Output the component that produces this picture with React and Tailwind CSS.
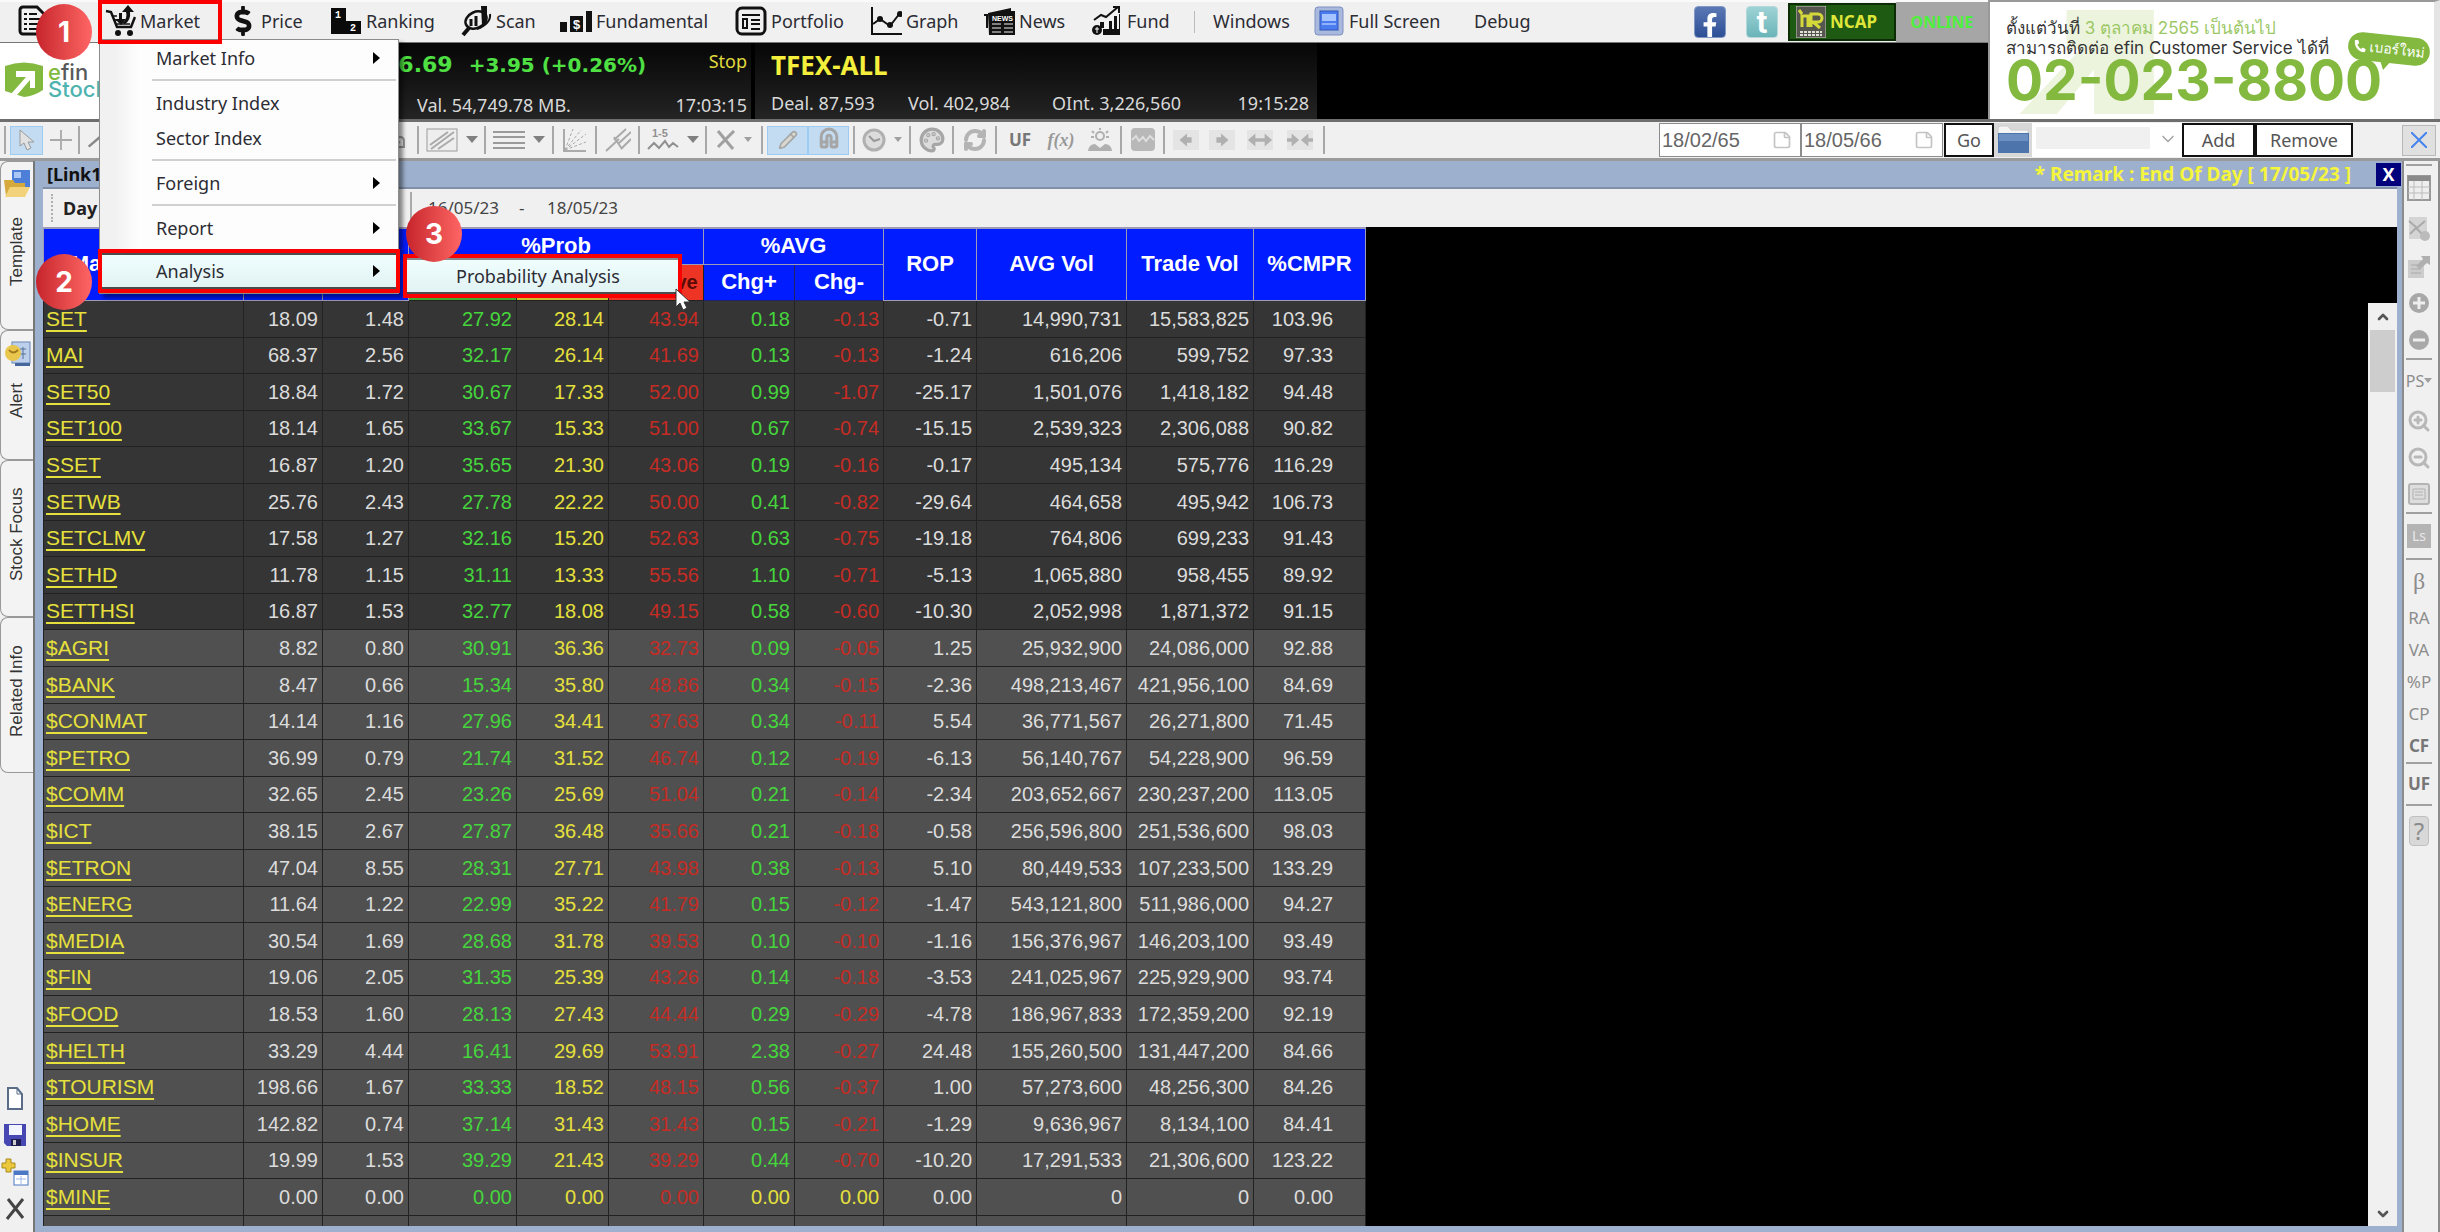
import { FaFacebookF, FaDollarSign, FaPhoneAlt } from 'react-icons/fa';
import {
  Palette, RefreshCw, ZoomIn, ZoomOut, Magnet, Pencil,
  ChevronUp, ChevronDown, StickyNote,
} from 'lucide-react';

const rows = [
  ['SET', '18.09', '1.48', '27.92', '28.14', '43.94', '0.18', '-0.13', '-0.71', '14,990,731', '15,583,825', '103.96'],
  ['MAI', '68.37', '2.56', '32.17', '26.14', '41.69', '0.13', '-0.13', '-1.24', '616,206', '599,752', '97.33'],
  ['SET50', '18.84', '1.72', '30.67', '17.33', '52.00', '0.99', '-1.07', '-25.17', '1,501,076', '1,418,182', '94.48'],
  ['SET100', '18.14', '1.65', '33.67', '15.33', '51.00', '0.67', '-0.74', '-15.15', '2,539,323', '2,306,088', '90.82'],
  ['SSET', '16.87', '1.20', '35.65', '21.30', '43.06', '0.19', '-0.16', '-0.17', '495,134', '575,776', '116.29'],
  ['SETWB', '25.76', '2.43', '27.78', '22.22', '50.00', '0.41', '-0.82', '-29.64', '464,658', '495,942', '106.73'],
  ['SETCLMV', '17.58', '1.27', '32.16', '15.20', '52.63', '0.63', '-0.75', '-19.18', '764,806', '699,233', '91.43'],
  ['SETHD', '11.78', '1.15', '31.11', '13.33', '55.56', '1.10', '-0.71', '-5.13', '1,065,880', '958,455', '89.92'],
  ['SETTHSI', '16.87', '1.53', '32.77', '18.08', '49.15', '0.58', '-0.60', '-10.30', '2,052,998', '1,871,372', '91.15'],
  ['$AGRI', '8.82', '0.80', '30.91', '36.36', '32.73', '0.09', '-0.05', '1.25', '25,932,900', '24,086,000', '92.88'],
  ['$BANK', '8.47', '0.66', '15.34', '35.80', '48.86', '0.34', '-0.15', '-2.36', '498,213,467', '421,956,100', '84.69'],
  ['$CONMAT', '14.14', '1.16', '27.96', '34.41', '37.63', '0.34', '-0.11', '5.54', '36,771,567', '26,271,800', '71.45'],
  ['$PETRO', '36.99', '0.79', '21.74', '31.52', '46.74', '0.12', '-0.19', '-6.13', '56,140,767', '54,228,900', '96.59'],
  ['$COMM', '32.65', '2.45', '23.26', '25.69', '51.04', '0.21', '-0.14', '-2.34', '203,652,667', '230,237,200', '113.05'],
  ['$ICT', '38.15', '2.67', '27.87', '36.48', '35.66', '0.21', '-0.18', '-0.58', '256,596,800', '251,536,600', '98.03'],
  ['$ETRON', '47.04', '8.55', '28.31', '27.71', '43.98', '0.38', '-0.13', '5.10', '80,449,533', '107,233,500', '133.29'],
  ['$ENERG', '11.64', '1.22', '22.99', '35.22', '41.79', '0.15', '-0.12', '-1.47', '543,121,800', '511,986,000', '94.27'],
  ['$MEDIA', '30.54', '1.69', '28.68', '31.78', '39.53', '0.10', '-0.10', '-1.16', '156,376,967', '146,203,100', '93.49'],
  ['$FIN', '19.06', '2.05', '31.35', '25.39', '43.26', '0.14', '-0.18', '-3.53', '241,025,967', '225,929,900', '93.74'],
  ['$FOOD', '18.53', '1.60', '28.13', '27.43', '44.44', '0.29', '-0.29', '-4.78', '186,967,833', '172,359,200', '92.19'],
  ['$HELTH', '33.29', '4.44', '16.41', '29.69', '53.91', '2.38', '-0.27', '24.48', '155,260,500', '131,447,200', '84.66'],
  ['$TOURISM', '198.66', '1.67', '33.33', '18.52', '48.15', '0.56', '-0.37', '1.00', '57,273,600', '48,256,300', '84.26'],
  ['$HOME', '142.82', '0.74', '37.14', '31.43', '31.43', '0.15', '-0.21', '-1.29', '9,636,967', '8,134,100', '84.41'],
  ['$INSUR', '19.99', '1.53', '39.29', '21.43', '39.29', '0.44', '-0.70', '-10.20', '17,291,533', '21,306,600', '123.22'],
  ['$MINE', '0.00', '0.00', '0.00', '0.00', '0.00', '0.00', '0.00', '0.00', '0', '0', '0.00'],
];

const WHITE = 'text-[#dcdcdc]';
const GREEN = 'text-[#45d63c]';
const YELLOW = 'text-[#e6e03c]';
const RED = 'text-[#c52c24]';
const columnColors = [YELLOW, WHITE, WHITE, GREEN, YELLOW, RED, GREEN, RED, WHITE, WHITE, WHITE, WHITE];

const cellColor = (value, col) => {
  // unchanged averages are yellow
  if ((col === 6 || col === 7) && value === '0.00') return YELLOW;
  return columnColors[col];
};

/* ---------- menu bar icons ---------- */

const DocIcon = () => (
  <svg viewBox="0 0 32 32" className="w-8 h-8">
    <path d="M5 2h14l8 8v16a3 3 0 0 1-3 3H5a3 3 0 0 1-3-3V5a3 3 0 0 1 3-3z" fill="none" stroke="#111" strokeWidth="3" />
    <path d="M6 9h3M11 9h8M6 14h3M11 14h12M6 19h3M11 19h12M6 24h3M11 24h12" stroke="#111" strokeWidth="2" />
  </svg>
);

const CartIcon = () => (
  <svg viewBox="0 0 32 32" className="w-8 h-8">
    <path d="M2 6l5 1 6 15h14l4-10" fill="none" stroke="#111" strokeWidth="2.5" />
    <path d="M9 11h4M11 15h4M13 19h13" stroke="#111" strokeWidth="1.5" />
    <path d="M15 8h3v6h4l-5 6-6-6h4z" fill="#111" />
    <path d="M24 0l6 7h-4q1 8-5 12l-3-1q6-4 4-11h-4z" fill="#111" />
    <circle cx="14" cy="28" r="3" fill="#111" />
    <circle cx="26" cy="28" r="3" fill="#111" />
  </svg>
);

const RankingIcon = () => (
  <svg viewBox="0 0 32 32" className="w-8 h-8">
    <path d="M1 3h15v13h15v13H1z" fill="#0a0a0a" />
    <text x="5" y="13" fontSize="10" fontWeight="bold" fill="#fff" fontFamily="Liberation Mono, monospace">1</text>
    <text x="20" y="26" fontSize="10" fontWeight="bold" fill="#fff" fontFamily="Liberation Mono, monospace">2</text>
  </svg>
);

const ScanIcon = () => (
  <svg viewBox="0 0 32 32" className="w-8 h-8">
    <ellipse cx="16" cy="15" rx="11" ry="8" transform="rotate(-25 16 15)" fill="none" stroke="#111" strokeWidth="2.5" />
    <path d="M9 23l-6 7" stroke="#111" strokeWidth="4" />
    <path d="M11 14v7M16 11v10" stroke="#111" strokeWidth="3" />
    <path d="M21 1h6v14l-5 5z" fill="#111" />
    <path d="M30 9c1 6-4 12-13 15" fill="none" stroke="#111" strokeWidth="2" />
  </svg>
);

const FundamentalIcon = () => (
  <svg viewBox="0 0 32 32" className="w-8 h-8">
    <path d="M0 17h7v10H0zM10 11h13v16H10zM26 6h6v21h-6z" fill="#111" />
    <text x="13" y="24" fontSize="13" fontWeight="bold" fill="#fff" fontFamily="Liberation Sans, sans-serif">$</text>
  </svg>
);

const PortfolioIcon = () => (
  <svg viewBox="0 0 32 32" className="w-8 h-8">
    <rect x="2" y="3" width="28" height="26" rx="5" fill="none" stroke="#111" strokeWidth="3" />
    <path d="M7 10h18M16 15h9M16 19h9M16 24h9" stroke="#111" strokeWidth="2" />
    <rect x="8" y="14" width="4" height="9" fill="none" stroke="#111" strokeWidth="2" />
  </svg>
);

const GraphIcon = () => (
  <svg viewBox="0 0 32 32" className="w-8 h-8">
    <path d="M2 2v27h30" fill="none" stroke="#111" strokeWidth="2" />
    <path d="M3 19l7-5 10 7 10-13" fill="none" stroke="#111" strokeWidth="2" />
    <circle cx="10" cy="14" r="3" fill="#111" />
    <circle cx="20" cy="20" r="3" fill="#111" />
    <circle cx="30" cy="9" r="3" fill="#111" />
  </svg>
);

const NewsIcon = () => (
  <svg viewBox="0 0 32 32" className="w-8 h-8">
    <path d="M1 9h4v14H3V11H1zM5 8l23-5v3H32v24H6z" fill="#111" />
    <path d="M9 19h9M9 23h9M9 27h9M21 19h9M21 23h9M21 27h9" stroke="#f0f0f0" strokeWidth="1" />
    <text x="9" y="16" fontSize="7" fontWeight="bold" fill="#fff" fontFamily="Liberation Sans, sans-serif">NEWS</text>
  </svg>
);

const FundIcon = () => (
  <svg viewBox="0 0 32 32" className="w-8 h-8">
    <path d="M3 15l7-5 5 2 12-10M22 2h6v6" fill="none" stroke="#111" strokeWidth="2" />
    <path d="M18 16h3v14h-3zM23 11h3v19h-3zM28 9h1v21h-1zM9 17h4v6H9zM12 24h17v6H12z" fill="#111" />
    <circle cx="6" cy="25" r="5" fill="#111" />
    <path d="M6 22v6M4 24h4" stroke="#fff" strokeWidth="1" />
  </svg>
);

const ScreenIcon = () => (
  <svg viewBox="0 0 32 32" className="w-8 h-8">
    <rect x="2" y="2" width="28" height="28" rx="3" fill="#a9b8dd" stroke="#7f90c0" strokeWidth="1" />
    <rect x="7" y="6" width="18" height="19" fill="#4a7cf0" stroke="#3457b5" />
    <path d="M9 9h14v7H9z" fill="#a6c4ff" />
    <path d="M9 19h14" stroke="#8fb2fb" strokeWidth="2" />
  </svg>
);

const menuItems = [
  { icon: <CartIcon />, label: 'Market', width: 'w-[125px]' },
  { icon: <FaDollarSign className="w-7 h-[30px]" color="#111" />, label: 'Price', width: 'w-[101px]' },
  { icon: <RankingIcon />, label: 'Ranking', width: 'w-[130px]' },
  { icon: <ScanIcon />, label: 'Scan', width: 'w-[100px]' },
  { icon: <FundamentalIcon />, label: 'Fundamental', width: 'w-[175px]' },
  { icon: <PortfolioIcon />, label: 'Portfolio', width: 'w-[135px]' },
  { icon: <GraphIcon />, label: 'Graph', width: 'w-[113px]' },
  { icon: <NewsIcon />, label: 'News', width: 'w-[108px]' },
  { icon: <FundIcon />, label: 'Fund', width: 'w-[103px]' },
];

const MenuBar = () => (
  <nav className="h-[42px] flex items-center bg-[#f0f0f0] pl-[18px] border-t-2 border-[#fafafa] text-[#2c2c34]">
    <button className="w-[86px] h-10 pb-[2px] flex items-center" aria-label="File"><DocIcon /></button>
    {menuItems.map((item) => (
      <button key={item.label} className={`${item.width} h-10 pb-[2px] shrink-0 flex items-center gap-1 text-left whitespace-nowrap`}>
        {item.icon}
        {item.label}
      </button>
    ))}
    <span className="w-px h-[22px] bg-[#bbb]" />
    <button className="w-[118px] h-10 pb-[2px] text-left pl-[18px]">Windows</button>
    <button className="w-[161px] h-10 pb-[2px] flex items-center gap-1 whitespace-nowrap"><ScreenIcon />Full Screen</button>
    <button className="h-10 pb-[2px]">Debug</button>

    <div className="ml-auto flex items-center self-stretch">
      <a href="#facebook" aria-label="Facebook" className="w-8 h-8 rounded bg-linear-to-b from-[#5b78b5] to-[#2d4f95] border border-[#8298c4] flex items-end justify-center">
        <FaFacebookF className="w-5 h-6 text-white" />
      </a>
      <a href="#twitter" aria-label="Twitter" className="ml-5 w-8 h-8 rounded bg-linear-to-b from-[#9ed3d6] to-[#6ab4b8] border border-[#b5d8da] flex items-center justify-center text-white font-bold text-[30px] leading-6 font-[Inter,sans-serif]">
        t
      </a>
      <div className="ml-[10px] w-[108px] h-[38px] bg-[#1f5a12] border-2 border-[#0c2c06] flex items-center pl-[6px] gap-1">
        <svg viewBox="0 0 30 32" className="w-[30px] h-8">
          <rect width="30" height="32" fill="#55574f" stroke="#c8c8c0" />
          <path d="M3 4l3 4M6 21V10h6v11M15 21V8h7a4 4 0 0 1 0 8h-5l7 6" fill="none" stroke="#d5d83a" strokeWidth="3" />
          <path d="M4 26h22M4 29h22" stroke="#e0e0d8" strokeWidth="2" strokeDasharray="3 1" />
        </svg>
        <span className="font-bold text-[17px] text-[#dfe63a]">NCAP</span>
      </div>
      <div className="w-[92px] self-stretch bg-[#a6a6a6] flex items-center justify-center font-bold text-[#4df03c] text-base">ONLINE</div>
    </div>
  </nav>
);

const Ticker = () => (
  <div className="h-[77px] bg-black border-t border-[#777] flex text-[#d8d8d8]">
    <div className="w-[150px] bg-white flex items-center gap-1 pl-1">
      <svg viewBox="0 0 40 40" className="w-10 h-10">
        <path d="M1 5q19-7 38 0v24q-9 6-19 7L1 30z" fill="#83b93f" />
        <path d="M12 10h19v17h-5V19L13 34l-6-1 15-17H12z" fill="#fff" />
      </svg>
      <div className="text-[22px] leading-[17px] font-[Inter,sans-serif] text-[#58595b] font-medium">
        <span className="text-[#83b93f]">e</span>fin
        <div className="text-[#4fb3b0]">Stock</div>
      </div>
    </div>
    <div className="w-[605px] bg-linear-to-b from-[#070707] to-[#242424] border-r-4 border-black pr-1 flex flex-col justify-between pt-2">
      <div className="flex items-start justify-end">
        <span className="font-bold text-[22px] leading-7 text-[#4fe043] font-['DejaVu_Sans',sans-serif]">1,526.69</span>
        <span className="ml-4 w-[240px] font-bold text-xl leading-7 text-[#4fe043] font-['DejaVu_Sans',sans-serif]">+3.95 (+0.26%)</span>
        <span className="leading-5 text-[#e0da3c]">Stop</span>
      </div>
      <div className="flex justify-between pl-[267px] leading-7">
        <span>Val. 54,749.78 MB.</span>
        <span>17:03:15</span>
      </div>
    </div>
    <div className="w-[562px] bg-linear-to-b from-[#070707] to-[#242424] pl-4 pr-2 flex flex-col justify-between pt-2">
      <span className="font-bold text-[26px] leading-7 text-[#f4ee3c]">TFEX-ALL</span>
      <div className="grid grid-cols-[137px_144px_1fr_auto] leading-8">
        <span>Deal. 87,593</span>
        <span>Vol. 402,984</span>
        <span>OInt. 3,226,560</span>
        <span>19:15:28</span>
      </div>
    </div>
  </div>
);

const ContactBanner = () => (
  <aside className="relative w-[452px] shrink-0 bg-white border-l-2 border-t-2 border-[#999] border-r-[6px] border-r-[#e4e4e4] font-[Inter,sans-serif] pl-4 pt-4">
    <svg viewBox="0 0 160 110" className="absolute left-[26px] top-[7px] w-[160px] h-[108px]">
      <path d="M50 1h89v106H78V62L40 107H2l62-66H50z" fill="#ecf4dd" />
    </svg>
    <div className="relative text-[#333] text-[17px] leading-5 whitespace-nowrap">
      <p>ตั้งแต่วันที่ <span className="text-[#9cc866]">3 ตุลาคม 2565 เป็นต้นไป</span></p>
      <p>สามารถติดต่อ efin Customer Service ได้ที่</p>
      <p className="text-[#83b93f] font-bold text-[55px] leading-11">02-023-8800</p>
    </div>
    <div className="absolute right-1 top-[33px] rotate-6 h-7 w-[82px] rounded-[14px] bg-[#83b93f] flex items-center justify-center gap-1 text-white text-sm whitespace-nowrap">
      <FaPhoneAlt className="w-3 h-3" />เบอร์ใหม่
    </div>
    <svg viewBox="0 0 12 10" className="absolute left-[390px] top-[58px] w-3 h-[10px]"><path d="M0 0h12L3 10z" fill="#83b93f" /></svg>
  </aside>
);

/* ---------- drawing toolbar ---------- */

const Sep = () => <span className="w-[2px] h-7 bg-[#a8a8a8] shrink-0" />;

const Triangle = () => (
  <svg viewBox="0 0 12 8" className="w-3 h-2 shrink-0"><path d="M0 0h12L6 7z" fill="#808080" /></svg>
);

const SmallTriangle = () => (
  <svg viewBox="0 0 8 6" className="w-2 h-[6px]"><path d="M0 0h8L4 5z" fill="#a0a0a0" /></svg>
);

const Tool = ({ label, width, active, children }) => (
  <button
    aria-label={label}
    className={`${width} h-[29px] shrink-0 flex items-center justify-center gap-2 text-[#a6a6a6] ${
      active ? 'bg-[#c3dcf2] border border-[#9cccf4]' : ''
    }`}
  >
    {children}
  </button>
);

const ArrowTool = ({ d }) => (
  <svg viewBox="0 0 28 20" className="w-[26px] h-5 bg-[#e4e4e4]"><path d={d} fill="#b0b0b0" /></svg>
);

const DateBox = ({ label, value }) => (
  <div className="w-[142px] h-[34px] bg-white border border-[#8c8c8c] flex items-center pr-1 pl-[2px]">
    <input aria-label={label} defaultValue={value} className="w-[110px] text-xl text-[#666] font-['Liberation_Sans',sans-serif] outline-none" />
    <StickyNote className="w-5 h-5 text-[#c4c4c4]" strokeWidth={2} />
  </div>
);

const Toolbar = () => (
  <div className="h-[42px] bg-[#f0f0f0] border-t-[3px] border-b-[3px] border-t-[#6e6e6e] border-b-[#9a9a9a] flex items-center pl-1">
    <Sep />
    <div className="pl-1 flex items-center">
      <Tool label="Pointer" width="w-[33px]" active>
        <svg viewBox="0 0 16 22" className="w-4 h-[22px]"><path d="M1 1v16l4-3 3 7 4-2-3-6h6z" fill="#e2e2e2" stroke="#999" /></svg>
      </Tool>
      <Tool label="Crosshair" width="w-[35px]"><svg viewBox="0 0 24 24" className="w-[22px] h-6"><path d="M0 12h24M12 1v22" stroke="#aaa" strokeWidth="2" /></svg></Tool>
      <Sep />
      <Tool label="Line" width="w-[34px]"><svg viewBox="0 0 24 24" className="w-5 h-5"><path d="M2 20L22 3" stroke="#888" strokeWidth="3" /></svg></Tool>
    </div>
    <div className="w-[303px] pr-3 flex items-center justify-end">
      <svg viewBox="0 0 20 20" className="w-5 h-5"><path d="M10 8q9-3 9 3v6h-5q-5-3 1-5" fill="none" stroke="#999" strokeWidth="2" /></svg>
    </div>
    <Sep />
    <Tool label="Channel" width="w-[65px]">
      <svg viewBox="0 0 32 24" className="w-8 h-6"><rect x="1" y="1" width="30" height="22" fill="#eee" stroke="#999" /><path d="M4 17L22 4M5 21L28 4M12 21L28 10" stroke="#aaa" strokeWidth="2" /></svg>
      <Triangle />
    </Tool>
    <Sep />
    <Tool label="Levels" width="w-[66px]">
      <svg viewBox="0 0 32 20" className="w-8 h-5"><path d="M0 2h32M0 7h32M0 13h32M0 18h32" stroke="#9a9a9a" strokeWidth="2" /></svg>
      <Triangle />
    </Tool>
    <Sep />
    <Tool label="Fan" width="w-[41px]">
      <svg viewBox="0 0 24 24" className="w-6 h-6"><path d="M1 1v22h22" fill="none" stroke="#aaa" strokeWidth="2" /><path d="M2 22L10 1M2 22L18 2M2 22L23 6M2 22l21-8" stroke="#aaa" strokeDasharray="3 2" /></svg>
    </Tool>
    <Sep />
    <Tool label="Pitchfork" width="w-[41px]">
      <svg viewBox="0 0 26 24" className="w-[26px] h-6"><path d="M1 23L14 11M9 12L21 1M13 16L26 4M16 21l10-10M9 9l8 12" fill="none" stroke="#aaa" strokeWidth="2" /></svg>
    </Tool>
    <Sep />
    <Tool label="Waves" width="w-[65px]">
      <svg viewBox="0 0 32 24" className="w-8 h-6">
        <text x="5" y="9" fontSize="11" fontWeight="bold" fill="#909090" fontFamily="Liberation Sans, sans-serif">1-5</text>
        <path d="M1 21l6-6 5 5 6-7 4 6 4-4 5 4" fill="none" stroke="#909090" strokeWidth="2" />
      </svg>
      <Triangle />
    </Tool>
    <Sep />
    <Tool label="Delete" width="w-[54px]">
      <svg viewBox="0 0 20 20" className="w-5 h-5"><path d="M2 1l15 18M18 1L2 17" stroke="#a0a0a0" strokeWidth="3" /></svg>
      <SmallTriangle />
    </Tool>
    <Sep />
    <div className="px-1 flex">
      <Tool label="Pencil" width="w-[41px]" active><Pencil className="w-5 h-5" fill="#d8d8d0" /></Tool>
      <Tool label="Magnet" width="w-[41px]" active><Magnet className="w-6 h-6 -rotate-45" strokeWidth={3} /></Tool>
    </div>
    <Sep />
    <Tool label="Interval" width="w-[54px]">
      <svg viewBox="0 0 24 24" className="w-6 h-6"><circle cx="12" cy="12" r="10" fill="#dcdcdc" stroke="#b0b0b0" strokeWidth="3" /><path d="M7 8l5 5 6-2" fill="none" stroke="#999" strokeWidth="2" /></svg>
      <SmallTriangle />
    </Tool>
    <Sep />
    <Tool label="Colours" width="w-[41px]"><Palette className="w-[26px] h-[26px]" fill="#dcdcdc" strokeWidth={3} /></Tool>
    <Sep />
    <Tool label="Refresh" width="w-[41px]"><RefreshCw className="w-6 h-6 text-[#b4b4b4]" strokeWidth={4} /></Tool>
    <Sep />
    <Tool label="UF" width="w-[46px]"><span className="font-bold text-[#777] text-[17px]">UF</span></Tool>
    <Tool label="Function" width="w-[36px]"><span className="font-bold italic font-['Liberation_Serif',serif] text-[#999] text-lg">f(x)</span></Tool>
    <Tool label="Alert" width="w-[41px]">
      <svg viewBox="0 0 26 24" className="w-[26px] h-6"><circle cx="13" cy="8" r="4" fill="none" stroke="#b0b0b0" strokeWidth="2" /><path d="M13 0v2M5 3l2 2M21 3l-2 2M4 9h3M19 9h3" stroke="#b0b0b0" strokeWidth="2" /><path d="M1 23q1-7 7-7l5 4 5-4q6 0 7 7z" fill="#b0b0b0" /></svg>
    </Tool>
    <Sep />
    <Tool label="Indicator" width="w-[41px]">
      <svg viewBox="0 0 26 24" className="w-[26px] h-6"><rect x="1" y="0" width="24" height="23" rx="4" fill="#b8b8b8" /><path d="M2 12l4-4 3 5 4-4 3 4 4-5 4 4" fill="none" stroke="#dedede" strokeWidth="2" /></svg>
    </Tool>
    <Sep />
    <div className="px-2 flex gap-[10px]">
      <Tool label="Previous" width="w-[26px]"><ArrowTool d="M20 7h-5V3l-8 7 8 7v-4h5z" /></Tool>
      <Tool label="Next" width="w-[26px]"><ArrowTool d="M8 7h5V3l8 7-8 7v-4H8z" /></Tool>
      <Tool label="Expand" width="w-[30px]"><ArrowTool d="M1 10l8-7v5h10V3l8 7-8 7v-5H9v5z" /></Tool>
      <Tool label="Shrink" width="w-[30px]"><ArrowTool d="M0 8h5V3l8 7-8 7v-5H0zM28 8h-5V3l-8 7 8 7v-5h5z" /></Tool>
    </div>
    <Sep />

    <div className="ml-auto flex items-center text-[#555]">
      <span className="mr-[6px]"><Sep /></span>
      <DateBox label="From date" value="18/02/65" />
      <DateBox label="To date" value="18/05/66" />
      <button className="ml-[1px] w-[50px] h-[34px] bg-white border-2 border-[#111]">Go</button>
      <button aria-label="Open folder" className="w-[38px] h-[34px] bg-[#d8d8d8] flex items-center justify-center">
        <svg viewBox="0 0 32 30" className="w-8 h-[30px]"><path d="M1 4q0-3 3-3h7l3 4h17v10H1z" fill="#f4f4f4" stroke="#ccc" /><path d="M1 8h31v20H1z" fill="#4d74ab" /><path d="M2 9h29v7H2z" fill="#6c90c2" /></svg>
      </button>
      <div className="relative w-[150px] h-[34px] bg-white p-1 pr-8 pb-2">
        <select aria-label="Saved template" className="w-full h-full bg-[#f0f0f0] appearance-none" />
        <ChevronDown className="absolute right-1 top-[6px] w-5 h-5 text-[#a8a8a8]" />
      </div>
      <button className="w-[73px] h-[34px] bg-white border-2 border-[#111]">Add</button>
      <button className="w-[98px] h-[34px] bg-white border-2 border-[#111]">Remove</button>
      <button aria-label="Close toolbar" className="ml-[49px] mr-1 w-[34px] h-[31px] bg-[#e0e0e0] border border-[#b8b8b8] flex items-center justify-center">
        <svg viewBox="0 0 16 16" className="w-4 h-4"><path d="M0 0l16 16M16 0L0 16" stroke="#4583ee" strokeWidth="2" /></svg>
      </button>
    </div>
  </div>
);

/* ---------- side rails ---------- */

const SideTab = ({ label, size, icon }) => (
  <button className={`${size} w-full shrink-0 flex flex-col items-center bg-[#f3f3f3] border border-r-0 border-[#999] rounded-l-lg pt-2`}>
    {icon}
    <span className="flex-1 flex items-center justify-center [writing-mode:vertical-rl] rotate-180 text-[17px] leading-5 text-[#333] font-['Liberation_Sans',sans-serif]">
      {label}
    </span>
  </button>
);

const LeftRail = () => (
  <div className="w-[35px] shrink-0 bg-[#f0f0f0] border-r-2 border-[#777] flex flex-col">
    <SideTab
      label="Template"
      size="h-[169px] pb-6"
      icon={
        <svg viewBox="0 0 28 28" className="w-7 h-7"><path d="M9 0h18v17H9z" fill="#4e7fd8" /><path d="M11 2h7v6h-7z" fill="#a9c6f5" /><path d="M1 10h9l2 3h10v13H3z" fill="#d6a93c" /><path d="M7 17h20l-5 10H2z" fill="#f2d27a" /></svg>
      }
    />
    <SideTab
      label="Alert"
      size="h-[130px] pb-6"
      icon={
        <svg viewBox="0 0 28 28" className="w-7 h-7"><rect x="9" y="3" width="18" height="21" fill="#bcd0ec" stroke="#6b86b5" /><path d="M12 24h15v3H12z" fill="#46679c" /><path d="M20 8v12M17 10h6M17 15h6" stroke="#55709c" /><circle cx="10" cy="14" r="8" fill="#e9c64c" /><path d="M6 11q4 5 9 0" fill="none" stroke="#a07a1c" strokeWidth="2" /></svg>
      }
    />
    <SideTab label="Stock Focus" size="h-[157px] pb-4" />
    <SideTab label="Related Info" size="h-[156px] pb-4" />
    <div className="mt-auto mb-[10px] pr-1 flex flex-col items-center gap-[10px]">
      <svg viewBox="0 0 24 26" className="w-6 h-[26px]"><path d="M5 2h9l5 6v15H5z" fill="#fff" stroke="#5a6c88" strokeWidth="2" /><path d="M14 2v6h5" fill="none" stroke="#5a6c88" /></svg>
      <svg viewBox="0 0 24 26" className="w-6 h-[26px]"><path d="M1 2h22v22H4l-3-3z" fill="#4747b4" /><path d="M6 3h13v10H6z" fill="#f2f4ff" /><path d="M8 17h10v7H8z" fill="#1d1d50" /><path d="M10 18h3v5h-3z" fill="#ccc" /></svg>
      <svg viewBox="0 0 28 28" className="w-7 h-7"><path d="M5 1h5v4h4v5h-4v4H5v-4H1V5h4z" fill="#ecc93c" stroke="#a98a1c" /><rect x="13" y="13" width="14" height="14" fill="#fff" stroke="#4a78c4" /><path d="M13 13h14v4H13z" fill="#4a78c4" /><path d="M15 21h10M20 18v8" stroke="#9dbbe8" /></svg>
      <svg viewBox="0 0 24 26" className="w-6 h-[26px]"><path d="M5 3l15 19M20 3L4 23" stroke="#444" strokeWidth="3" /></svg>
    </div>
  </div>
);

const RailLine = () => <span className="w-[26px] h-[2px] bg-[#a0a0a0]" />;

const RailItem = ({ label, height, bold, children }) => (
  <button aria-label={label} className={`${height} w-full flex items-center justify-center text-[17px] leading-5 ${bold ? 'font-bold text-[#777]' : 'text-[#8c8c8c]'}`}>
    {children}
  </button>
);

const RightRail = () => (
  <div className="w-[38px] shrink-0 bg-[#f0f0f0] border-l-2 border-r-2 border-[#8c8c8c] pt-[3px] pr-1 flex flex-col items-center">
    <RailLine />
    <RailItem label="Grid" height="h-[44px]">
      <svg viewBox="0 0 24 26" className="w-6 h-[26px]"><rect x="1" y="1" width="22" height="24" fill="#eee" stroke="#999" strokeWidth="2" /><path d="M1 1h22v5H1z" fill="#8a8a8a" /><path d="M7 6v19M1 12h22M1 18h22M15 6v19" stroke="#bbb" /></svg>
    </RailItem>
    <RailItem label="Chart mail" height="h-[37px]">
      <svg viewBox="0 0 24 26" className="w-6 h-[26px]"><path d="M2 1h18v22H2z" fill="#d4d4d4" /><path d="M2 5l8 7 8-7M3 18l6-6 8 8" fill="none" stroke="#aaa" strokeWidth="2" /><circle cx="18" cy="20" r="5" fill="#bbb" /></svg>
    </RailItem>
    <RailItem label="Export" height="h-[37px]">
      <svg viewBox="0 0 24 26" className="w-6 h-[26px]"><path d="M1 7h16v18H1z" fill="#ccc" /><path d="M4 12h10M4 16h10M4 20h10" stroke="#aaa" /><path d="M9 13l7-7-2-3h9v9l-3-2-7 6z" fill="#b0b0b0" /></svg>
    </RailItem>
    <RailItem label="Add" height="h-[37px]">
      <svg viewBox="0 0 22 22" className="w-[22px] h-[22px]"><circle cx="11" cy="11" r="10" fill="#a8a8a8" /><path d="M5 11h12M11 5v12" stroke="#eee" strokeWidth="3" /></svg>
    </RailItem>
    <RailItem label="Subtract" height="h-[37px]">
      <svg viewBox="0 0 22 22" className="w-[22px] h-[22px]"><circle cx="11" cy="11" r="10" fill="#a8a8a8" /><path d="M5 11h12" stroke="#eee" strokeWidth="3" /></svg>
    </RailItem>
    <RailLine />
    <RailItem label="Price scale" height="h-[42px]">
      <span className="text-base">PS</span>
      <SmallTriangle />
    </RailItem>
    <RailItem label="Zoom in" height="h-[37px]"><ZoomIn className="w-6 h-6 text-[#b8b8b8]" strokeWidth={3} /></RailItem>
    <RailItem label="Zoom out" height="h-[37px]"><ZoomOut className="w-6 h-6 text-[#b8b8b8]" strokeWidth={3} /></RailItem>
    <RailItem label="Layout" height="h-9">
      <svg viewBox="0 0 24 22" className="w-6 h-[22px]"><rect x="2" y="1" width="20" height="20" rx="2" fill="#ddd" stroke="#b4b4b4" strokeWidth="2" /><path d="M6 6h12v10H6zM8 9h8M8 12h8" fill="none" stroke="#b0b0b0" /></svg>
    </RailItem>
    <RailLine />
    <RailItem label="Line study" height="h-[44px]"><span className="w-6 h-6 bg-[#b4b4b4] text-[#e8e8e8] text-sm leading-6">Ls</span></RailItem>
    <RailLine />
    <RailItem label="Beta" height="h-[42px]"><span className="font-['Liberation_Serif',serif] text-2xl">β</span></RailItem>
    <RailItem label="RA" height="h-8">RA</RailItem>
    <RailItem label="VA" height="h-8">VA</RailItem>
    <RailItem label="%P" height="h-8">%P</RailItem>
    <RailItem label="CP" height="h-8">CP</RailItem>
    <RailItem label="CF" height="h-8" bold>CF</RailItem>
    <RailLine />
    <RailItem label="UF" height="h-10" bold>UF</RailItem>
    <RailLine />
    <RailItem label="Help" height="h-[50px]"><span className="w-5 h-[30px] rounded-sm bg-[#d8d8d8] border border-[#c0c0c0] text-2xl leading-7">?</span></RailItem>
  </div>
);

/* ---------- probability table ---------- */

const headCell = 'bg-[#001cff] border border-t-2 border-[#9c9cb8] p-0';

const ProbabilityTable = () => (
  <table className="table-fixed border-collapse w-[1322px] shrink-0 self-start font-['Liberation_Sans',sans-serif] text-xl leading-6">
    <colgroup>
      <col className="w-[200px]" />
      <col className="w-[79px]" />
      <col className="w-[86px]" />
      <col className="w-[108px]" />
      <col className="w-[92px]" />
      <col className="w-[95px]" />
      <col className="w-[91px]" />
      <col className="w-[89px]" />
      <col className="w-[93px]" />
      <col className="w-[150px]" />
      <col className="w-[127px]" />
      <col className="w-[112px]" />
    </colgroup>
    <thead className="text-white text-[22px]">
      <tr className="h-9">
        <th rowSpan={2} className={headCell}>Market/Sector</th>
        <th rowSpan={2} className={headCell} />
        <th rowSpan={2} className={headCell} />
        <th colSpan={3} className={headCell}>%Prob</th>
        <th colSpan={2} className={headCell}>%AVG</th>
        <th rowSpan={2} className={headCell}>ROP</th>
        <th rowSpan={2} className={headCell}>AVG Vol</th>
        <th rowSpan={2} className={headCell}>Trade Vol</th>
        <th rowSpan={2} className={headCell}>%CMPR</th>
      </tr>
      <tr className="h-9">
        <th className="bg-[#3fae2c] border border-[#222] p-0" />
        <th className="bg-[#c9c02c] border border-[#222] p-0" />
        <th className="bg-[#ee3424] border border-[#222] p-0 text-xl text-[#5c0b06]">Negative</th>
        <th className="bg-[#001cff] border border-[#22226a] p-0">Chg+</th>
        <th className="bg-[#001cff] border border-[#22226a] p-0">Chg-</th>
      </tr>
    </thead>
    <tbody>
      {rows.map((row, i) => (
        <tr key={row[0]} className={`${(i % 5) % 2 ? 'h-9' : 'h-[37px]'} ${i < 9 ? 'bg-[#353535]' : 'bg-[#505050]'}`}>
          {row.map((value, col) => (
            <td
              key={col}
              className={`border border-[#222] py-0 ${cellColor(value, col)} ${
                col === 0 ? 'text-left pl-[2px] text-[21px]' : col === 11 ? 'text-right pr-8' : 'text-right pr-1'
              }`}
            >
              {col === 0 ? <a href={`#${value}`} className="underline underline-offset-4">{value}</a> : value}
            </td>
          ))}
        </tr>
      ))}
      <tr className="h-9 bg-[#505050]">
        {columnColors.map((c, i) => <td key={i} className="border border-[#222]" />)}
      </tr>
    </tbody>
  </table>
);

const AnalysisWindow = () => (
  <section className="flex-1 min-w-0 bg-[#9db0cd] flex flex-col pl-2 pr-[5px] pb-[6px]">
    <div className="h-7 shrink-0 flex items-center border-b-2 border-[#8090a8] text-[#111]">
      <h1 className="pl-1 font-bold">[Link1]</h1>
      <p className="ml-auto mr-[25px] font-bold text-[#f5f53c] text-[19px]">* Remark : End Of Day [ 17/05/23 ]</p>
      <button aria-label="Close window" className="-mr-1 w-[25px] h-[23px] bg-[#00007c] text-white font-bold leading-5">X</button>
    </div>
    <div className="h-[38px] shrink-0 bg-[#f0f0f0] flex items-center text-[#444]">
      <span className="ml-2 h-7 border-l-2 border-dotted border-[#b0b0b0]" />
      <span className="ml-[10px] w-[347px] font-bold text-[#222]">Day</span>
      <span className="w-[2px] h-8 bg-[#aaa]" />
      <span className="ml-4 w-[91px] text-[17px]">16/05/23</span>
      <span className="w-7 text-[17px]">-</span>
      <span className="text-[17px]">18/05/23</span>
    </div>
    <div className="flex-1 min-h-0 overflow-hidden bg-black flex">
      <ProbabilityTable />
      <div className="ml-auto w-[29px] mt-[76px] bg-[#f0f0f0] flex flex-col items-center">
        <button aria-label="Scroll up" className="h-[27px] flex items-center"><ChevronUp className="w-4 h-4 text-[#555]" strokeWidth={4} /></button>
        <span className="w-[25px] h-[62px] bg-[#cdcdcd]" />
        <button aria-label="Scroll down" className="mt-auto h-6 flex items-center"><ChevronDown className="w-4 h-4 text-[#555]" strokeWidth={4} /></button>
      </div>
    </div>
  </section>
);

/* ---------- open Market menu ---------- */

const Caret = () => (
  <svg viewBox="0 0 7 12" className="ml-auto mr-[18px] w-[7px] h-3"><path d="M0 0l7 6-7 6z" fill="#000" /></svg>
);

const MenuLine = () => <div className="ml-[52px] mr-[2px] h-[2px] bg-[#d0d0d0] my-1" />;

const MenuEntry = ({ label, submenu }) => (
  <button className="h-[35px] w-full flex items-center pl-14 text-left">
    {label}
    {submenu && <Caret />}
  </button>
);

const MarketMenu = () => (
  <div className="absolute left-[99px] top-[39px] w-[300px] bg-linear-to-r from-[#f1f1f1] from-5% via-[#fdfdfd] via-13% to-[#fdfdfd] border border-[#8c8c8c] shadow-[4px_4px_4px_rgba(0,0,0,0.45)] text-[#2c2c34]">
    <MenuEntry label="Market Info" submenu />
    <MenuLine />
    <MenuEntry label="Industry Index" />
    <MenuEntry label="Sector Index" />
    <MenuLine />
    <MenuEntry label="Foreign" submenu />
    <MenuLine />
    <MenuEntry label="Report" submenu />
    <div className="mt-1 -mx-[2px] border-4 border-[#fb0000]">
      <button className="h-9 w-full flex items-center pl-[54px] text-left bg-linear-to-b from-[#effdfd] to-[#e2f3f4] border-y-2 border-y-[#4c4c4c]">
        Analysis
        <svg viewBox="0 0 7 12" className="ml-auto mr-4 w-[7px] h-3"><path d="M0 0l7 6-7 6z" fill="#000" /></svg>
      </button>
    </div>
  </div>
);

const Badge = ({ place, children }) => (
  <span className={`absolute ${place} w-14 h-14 rounded-full bg-linear-to-r from-[#c6232b] to-[#ff6565] flex items-center justify-center text-white text-[28px] font-bold font-[Inter,sans-serif]`}>
    {children}
  </span>
);

export default function App() {
  return (
    <div className="relative h-screen w-full overflow-hidden flex flex-col bg-[#f0f0f0] text-lg leading-6 font-['Noto_Sans',sans-serif]">
      <header className="flex shrink-0">
        <div className="flex-1 min-w-0">
          <MenuBar />
          <Ticker />
        </div>
        <ContactBanner />
      </header>
      <Toolbar />
      <main className="flex-1 min-h-0 flex">
        <LeftRail />
        <AnalysisWindow />
        <RightRail />
      </main>

      <MarketMenu />
      <span className="absolute left-[98px] top-0 w-[124px] h-11 border-4 border-[#fb0000]" />
      <button className="absolute left-[403px] top-[254px] w-[279px] h-11 border-4 border-[#fb0000] text-left text-[#2c2c34]">
        <span className="h-9 pl-[49px] flex items-center bg-linear-to-b from-[#effdfd] to-[#e2f3f4] border-y-2 border-t-[#8a8a8a] border-b-[#4c4c4c]">
          Probability Analysis
        </span>
      </button>
      <Badge place="left-9 top-1">1</Badge>
      <Badge place="left-9 top-[254px]">2</Badge>
      <Badge place="left-[406px] top-[206px]">3</Badge>
      <svg viewBox="0 0 16 24" className="absolute left-[675px] top-[288px] w-4 h-6">
        <path d="M1 1v18l4-4 3 7 4-2-3-6h6z" fill="#fff" stroke="#333" />
      </svg>
    </div>
  );
}
